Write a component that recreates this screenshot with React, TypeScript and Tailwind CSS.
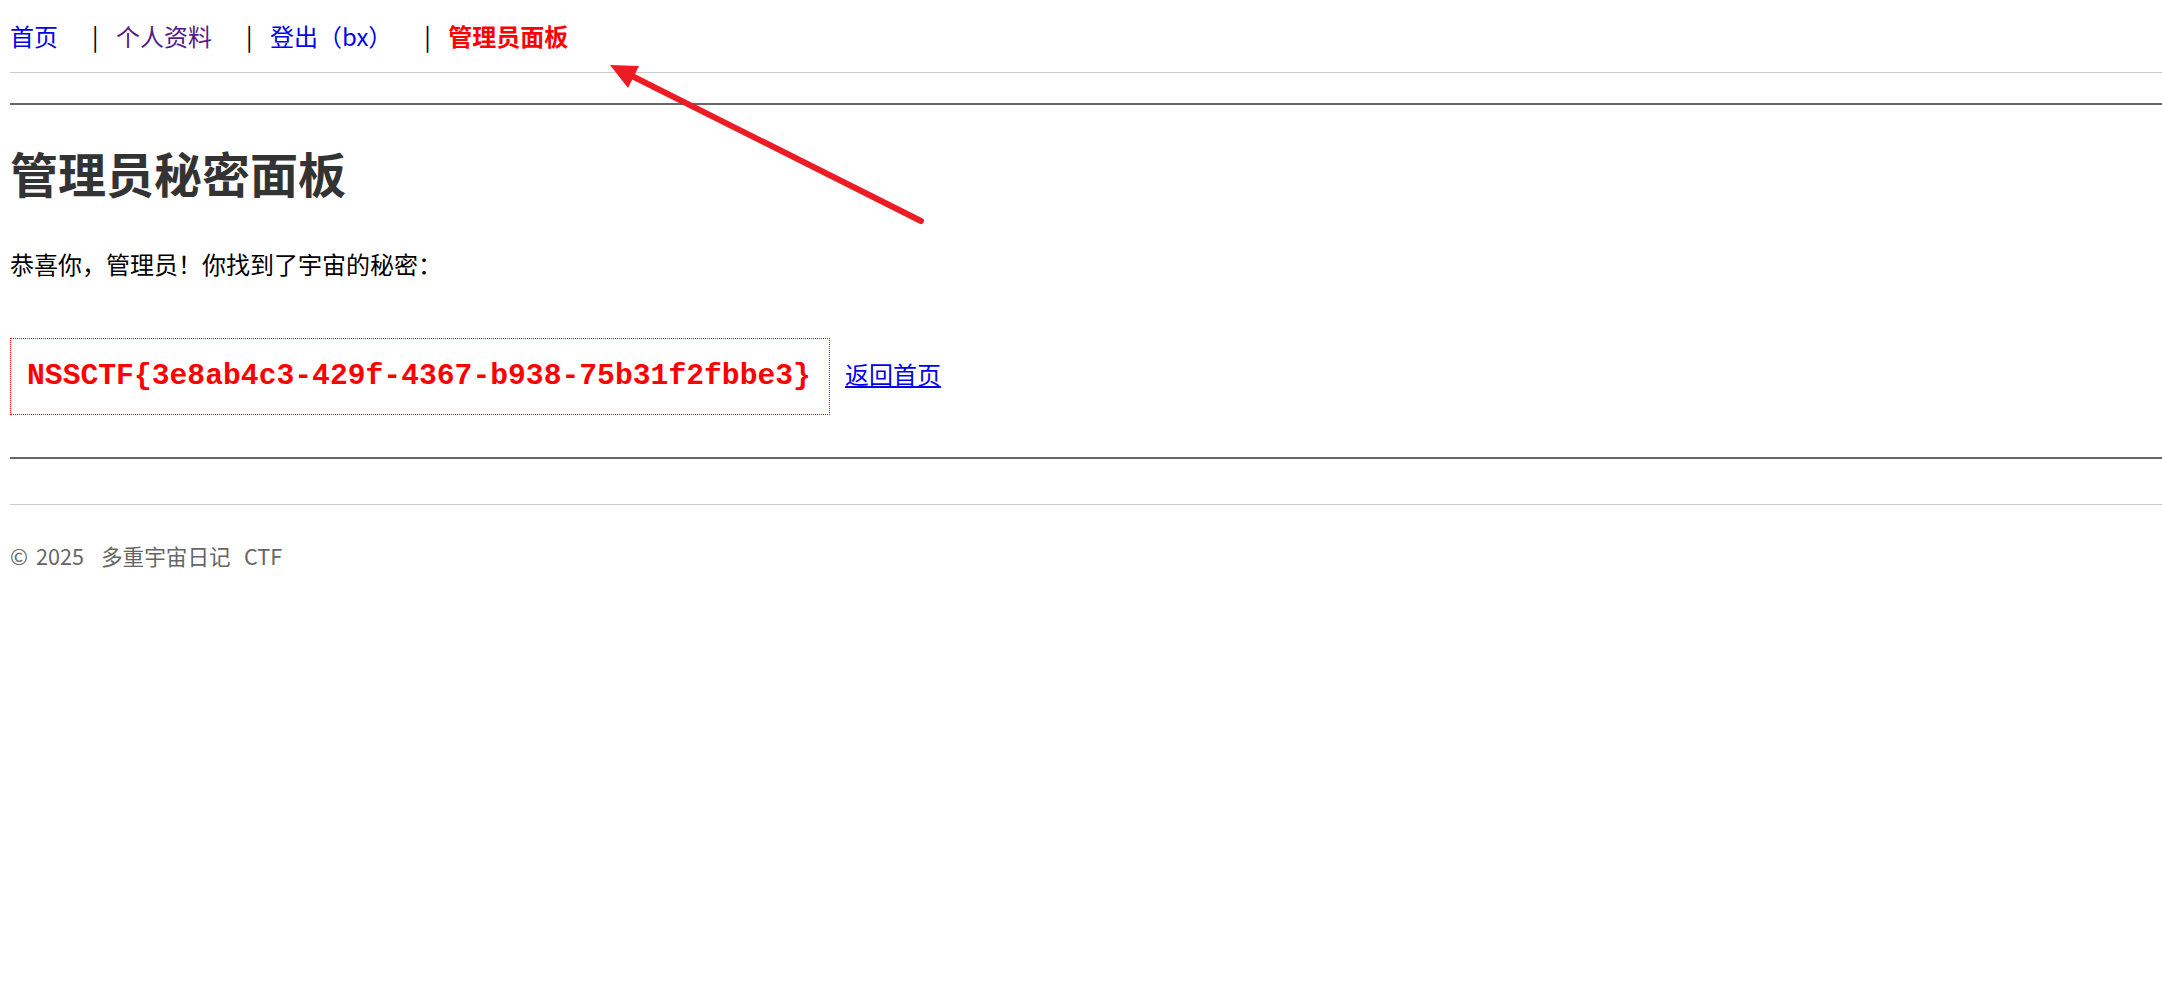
export default function App() {
  return (
    <div className="relative min-h-[988px] w-full bg-white pl-[10px] font-['Noto_Sans_CJK_SC',sans-serif] text-[24px] text-black">
      <nav className="flex items-baseline border-b border-[#cccccc] pt-[20px] pb-[20px] leading-[32px]">
        <a href="#" className="text-[#0000ee]">首页</a>
        <span className="ml-[34px] mr-[18px] inline-block w-[6px] text-center text-black">|</span>
        <a href="#" className="text-[#551a8b]">个人资料</a>
        <span className="ml-[34px] mr-[18px] inline-block w-[6px] text-center text-black">|</span>
        <a href="#" className="text-[#0000ee]">登出（bx）</a>
        <span className="ml-[32px] mr-[18px] inline-block w-[6px] text-center text-black">|</span>
        <a href="#" className="font-bold text-[#ff0000]">管理员面板</a>
      </nav>

      <hr className="mt-[30px] h-[2px] border-0 bg-[#666666]" />

      <h1 className="mt-[39px] text-[48px] font-bold leading-[56px] text-[#333333]">管理员秘密面板</h1>

      <p className="mt-[48px] leading-[32px]">恭喜你，管理员！你找到了宇宙的秘密：</p>

      <div className="mt-[58px] flex items-baseline">
        <span className="inline-block border border-dotted border-[#ff0000] pl-[16px] pr-[18px] pt-[14px] pb-[15px] font-['Liberation_Mono',monospace] text-[29.7px] font-bold leading-[46px] text-[#ff0000]">
          NSSCTF{'{'}3e8ab4c3-429f-4367-b938-75b31f2fbbe3{'}'}
        </span>
        <a href="#" className="ml-[15px] leading-[32px] text-[#0000ee] underline">返回首页</a>
      </div>

      <hr className="mt-[42px] h-[2px] border-0 bg-[#666666]" />

      <footer className="mt-[45px] border-t border-[#cccccc] pt-[36px] text-[21.6px] leading-[30px] text-[#666666]">
        <span className="inline-block w-[26px]">©</span>
        <span className="inline-block w-[65px]">2025</span>
        <span className="inline-block w-[143px]">多重宇宙日记</span>
        <span className="inline-block">CTF</span>
      </footer>

      <svg
        className="pointer-events-none absolute left-0 top-0"
        width="2162"
        height="988"
        viewBox="0 0 2162 988"
      >
        <line x1="626" y1="73" x2="921" y2="221" stroke="#ed1c24" strokeWidth="6" strokeLinecap="round" />
        <polygon points="610,65 639,66 628,88" fill="#ed1c24" />
      </svg>
    </div>
  );
}
